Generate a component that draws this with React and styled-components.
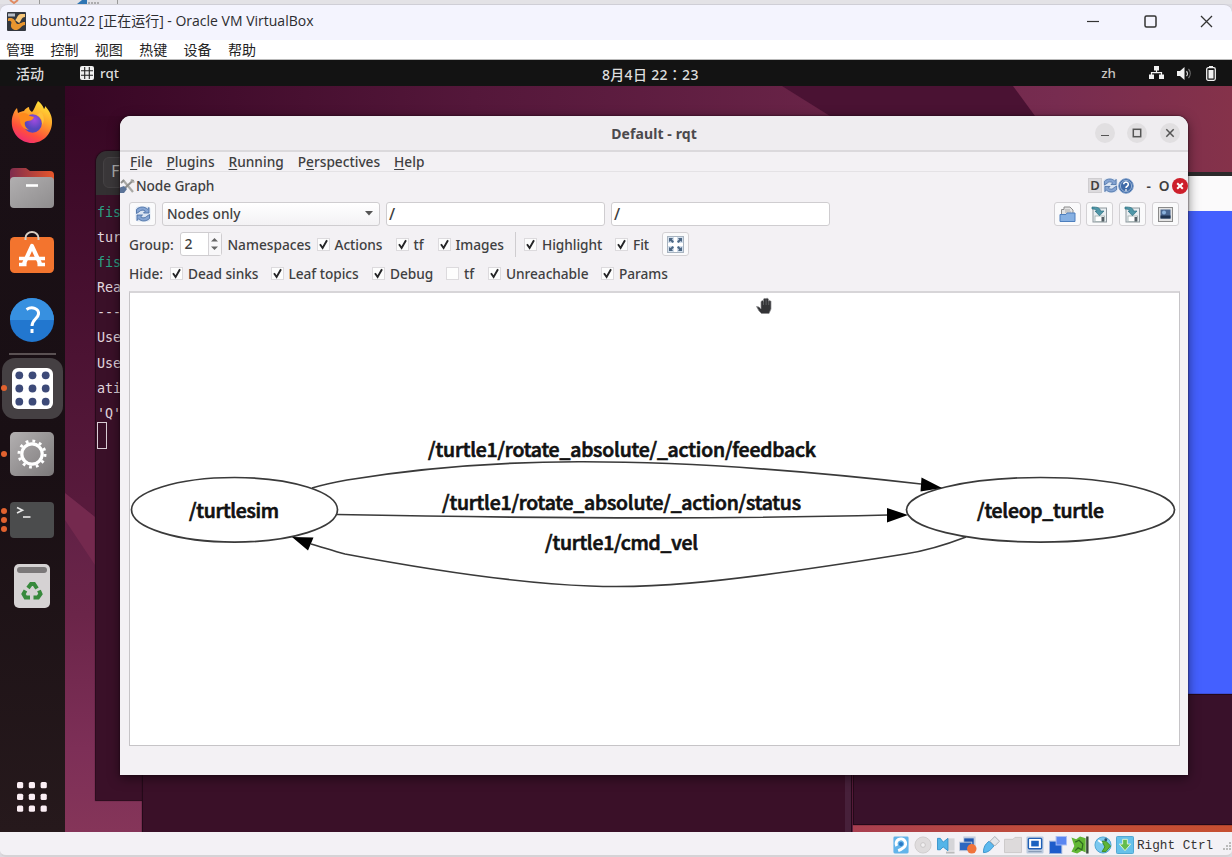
import React from 'react';
import styled, { createGlobalStyle } from 'styled-components';

const Global = createGlobalStyle`
  * { box-sizing: border-box; }
  html, body { margin: 0; padding: 0; overflow: hidden; }
  svg { display: block; flex: none; }
`;

const ui = `'Noto Sans', 'Noto Sans CJK SC', sans-serif`;

/* ---------- host window ---------- */
const Host = styled.div`
  width: 1232px;
  height: 857px;
  display: flex;
  flex-direction: column;
  background: #dcdae0;
  font-family: ${ui};
  overflow: hidden;
`;
const Behind = styled.div`
  height: 4px;
  flex: none;
  display: flex;
  background: #e3e2e6;
`;
const HostTitle = styled.header`
  height: 36px;
  flex: none;
  display: flex;
  align-items: center;
  padding: 0 19px 3px 7px;
  background: #f4f4fe;
  border-top: 1px solid #cfced6;
  border-radius: 8px 8px 0 0;
  font: 14px 'Open Sans', 'Noto Sans CJK SC', sans-serif;
  color: #2c2c30;
`;
const HostName = styled.span`
  flex: 1;
  padding: 0 0 2px 5px;
  white-space: nowrap;
`;
const HostControls = styled.div`
  display: flex;
  align-items: center;
  gap: 43.5px;
`;
const HostMenu = styled.nav`
  height: 20px;
  flex: none;
  display: flex;
  align-items: center;
  gap: 16.4px;
  padding: 0 0 2px 6px;
  background: #fff;
  border-bottom: 1px solid #b9b9b9;
  font: 14px/16px 'Noto Sans CJK SC', sans-serif;
  color: #222;
`;
const StatusBar = styled.footer`
  height: 25px;
  flex: none;
  display: flex;
  align-items: center;
  justify-content: flex-end;
  padding-top: 2px;
  background: #f3f1f5;
  border-bottom: 2px solid #d5d3d6;
  border-radius: 0 0 6px 6px;
`;
const StatusIcons = styled.div`
  display: flex;
  gap: 4.4px;
`;
const HostKey = styled.span`
  width: 98px;
  padding: 2px 0 0 3px;
  display: flex;
  justify-content: space-between;
  align-items: center;
  white-space: nowrap;
  font: 12.7px 'Liberation Mono', monospace;
  color: #333;
`;

/* ---------- guest shell ---------- */
const TopBar = styled.div`
  height: 26px;
  flex: none;
  display: grid;
  grid-template-columns: 1fr auto 1fr;
  align-items: center;
  background: #131313;
  color: #dedede;
  font: 500 13.4px ${ui};
`;
const TopLeft = styled.div`
  display: flex;
  align-items: center;
  padding-left: 16px;
`;
const Activities = styled.span`
  width: 64px;
  font-size: 14px;
`;
const AppName = styled.span`
  padding-left: 6px;
`;
const Clock = styled.div`
  width: 97px;
  margin-left: 69px;
  padding-top: 2px;
  font: 500 14px 'Noto Sans', 'Noto Sans CJK TC', sans-serif;
  letter-spacing: 0.3px;
  white-space: nowrap;
`;
const TopRight = styled.div`
  display: flex;
  justify-content: flex-end;
  align-items: center;
  padding-right: 16px;
`;
const Lang = styled.span`
  padding-right: 33px;
  color: #c9c6c2;
`;
const Gap = styled.span`
  width: ${(p) => p.$w}px;
  flex: none;
`;
const Guest = styled.div`
  flex: 1;
  min-height: 0;
  display: flex;
`;
const Dock = styled.aside`
  width: 65px;
  flex: none;
  display: flex;
  flex-direction: column;
  padding: 3px 0 14px;
  background: linear-gradient(#1a1016, #190f14 50%, #26191c);
`;
const DockItem = styled.div`
  height: 66px;
  flex: none;
  display: flex;
  align-items: center;
`;
const Dots = styled.span`
  position: relative;
  z-index: 1;
  width: 8px;
  display: flex;
  flex-direction: column;
  align-items: center;
  gap: 3px;
`;
const Dot = styled.i`
  width: 6px;
  height: 6px;
  border-radius: 3px;
  background: #e2622f;
`;
const DockTile = styled.div`
  width: ${(p) => (p.$active ? 61 : 48)}px;
  height: 61px;
  margin-left: ${(p) => (p.$active ? -6 : 0)}px;
  display: flex;
  align-items: center;
  justify-content: center;
  border-radius: 13px;
  background: ${(p) => (p.$active ? '#454043' : 'transparent')};
`;
const DockRule = styled.div`
  height: 2px;
  margin: 0 9px;
  flex: none;
  background: #5a5153;
`;
const DockFill = styled.div`
  flex: 1;
`;
const AppsGrid = styled.div`
  padding-left: 17px;
  padding-bottom: 6px;
`;

/* ---------- desktop windows ---------- */
const Desktop = styled.main`
  flex: 1;
  position: relative;
  overflow: hidden;
  background: #430a2c;
`;
const Wallpaper = styled.svg`
  width: 1167px;
  height: 746px;
`;
const Win = styled.section`
  position: absolute;
  left: ${(p) => p.$x}px;
  top: ${(p) => p.$y}px;
  width: ${(p) => p.$w}px;
  height: ${(p) => p.$h}px;
  display: flex;
  flex-direction: column;
  overflow: hidden;
`;
const TermWin = styled(Win)`
  background: ${(p) => p.$bg || '#3a1028'};
  box-shadow: 0 0 1px 1px #240919;
  border-radius: ${(p) => (p.$tabs ? '11px 0 0 0' : 0)};
  border-right: ${(p) => (p.$scroll ? '6px solid #47203a' : 'none')};
`;
const TermHeader = styled.div`
  height: 44px;
  flex: none;
  padding: 6px 0 0 7px;
  background: #333032;
`;
const TermTab = styled.div`
  width: 60px;
  height: 31px;
  padding: 5px 7px;
  border: 1px solid #454244;
  border-radius: 6px;
  background: #3a3739;
  color: #aaa;
  font: 15px 'DejaVu Sans Mono', monospace;
`;
const TermLine = styled.div`
  height: 25.1px;
  padding-left: 1px;
  font: 13.4px/25.1px 'DejaVu Sans Mono', monospace;
  white-space: pre;
  color: ${(p) => (p.$host ? '#2ba084' : '#e0d4dc')};
`;
const TermBody = styled.div`
  padding-top: 5px;
`;
const TermCursor = styled.div`
  width: 10px;
  height: 27px;
  margin-top: -4px;
  margin-left: 1px;
  border: 1px solid #d9ccd4;
`;
const TurtleWin = styled(Win)`
  background: #4460ff;
  border-top: 4px solid #2c2a2b;
`;
const TurtleHeader = styled.div`
  height: 35px;
  background: #fbfafb;
`;
const RqtWin = styled(Win)`
  background: #f3f1f4;
  border-radius: 11px 11px 0 0;
  box-shadow: 0 0 2px #1a0512, 0 3px 12px rgba(0, 0, 0, 0.5);
  color: #3f3f41;
  font: 500 13.7px ${ui};
`;
const RqtTitle = styled.div`
  height: 36px;
  margin-bottom: -1px;
  flex: none;
  display: grid;
  grid-template-columns: 1fr auto 1fr;
  align-items: center;
  background: #efedf0;
  border-bottom: 2px solid #dbd9dc;
`;
const RqtName = styled.span`
  grid-column: 2;
  font-weight: 700;
  font-size: 14px;
  letter-spacing: 0.1px;
  color: #4b494c;
`;
const RqtControls = styled.div`
  display: flex;
  justify-content: flex-end;
  gap: 12.6px;
  padding-right: 8px;
`;
const RoundBtn = styled.span`
  width: 20px;
  height: 20px;
  border-radius: 50%;
  background: #e1dfe1;
  display: flex;
  align-items: center;
  justify-content: center;
`;
const MenuRow = styled.nav`
  height: 21px;
  flex: none;
  display: flex;
  align-items: center;
  gap: 14px;
  padding-left: 10px;
  border-bottom: 1px solid #e4e2e5;
`;
const Mn = styled.span`
  text-decoration: underline;
  text-decoration-thickness: 1px;
  text-underline-offset: 2px;
`;
const DockRow = styled.div`
  height: 27px;
  flex: none;
  display: flex;
  align-items: center;
  white-space: nowrap;
`;
const DockName = styled.span`
  flex: 1;
  padding-left: 1px;
  letter-spacing: -0.1px;
`;
const DButton = styled.span`
  width: 14px;
  height: 15px;
  margin-right: 1px;
  font-weight: 600;
  font-size: 13px;
  line-height: 13px;
  text-align: center;
  background: #dcdadd;
  border: 1px solid #cfcdd0;
`;
const MiniText = styled.span`
  width: 15.5px;
  text-align: center;
  font-weight: 600;
`;
const ToolRow = styled.div`
  height: ${(p) => p.$h}px;
  flex: none;
  display: flex;
  align-items: center;
  padding: 0 9px;
  white-space: nowrap;
`;
const IconBtn = styled.span`
  width: 27px;
  height: 24px;
  flex: none;
  display: flex;
  align-items: center;
  justify-content: center;
  background: #fafafb;
  border: 1px solid #d3d1d4;
  border-radius: 3px;
`;
const Combo = styled.div`
  width: 218px;
  height: 24px;
  margin: 0 6px;
  padding: 0 6px 1px 4px;
  display: flex;
  align-items: center;
  justify-content: space-between;
  background: linear-gradient(#fff, #f3f2f4);
  border: 1px solid #cfcdd0;
  border-radius: 3px;
`;
const Field = styled.div`
  width: 219px;
  height: 24px;
  margin-right: 6px;
  padding-left: 2px;
  line-height: 23px;
  font-size: 16px;
  background: #fff;
  border: 1px solid #cfcdd0;
  border-radius: 3px;
`;
const RightTools = styled.div`
  flex: 1;
  display: flex;
  justify-content: flex-end;
  gap: 5.8px;
`;
const Text = styled.span`
  width: ${(p) => p.$w}px;
  flex: none;
`;
const Spin = styled.div`
  width: 42px;
  height: 24px;
  margin-right: 6px;
  display: flex;
  background: #fff;
  border: 1px solid #cfcdd0;
  border-radius: 3px;
`;
const SpinValue = styled.span`
  width: 28px;
  padding-left: 4px;
  line-height: 21px;
  font-size: 14px;
  border-right: 1px solid #d5d3d6;
`;
const SpinArrows = styled.span`
  flex: 1;
  background: #f8f7f9;
  display: flex;
  justify-content: center;
  align-items: center;
`;
const CheckItem = styled.span`
  width: ${(p) => p.$w}px;
  flex: none;
  display: flex;
  align-items: center;
  gap: 5px;
  letter-spacing: -0.05px;
`;
const Box = styled.span`
  width: 13px;
  height: 13px;
  flex: none;
  background: #fdfdfd;
  border: 1px solid #dcdadd;
`;
const Divider = styled.span`
  width: 1px;
  height: 25px;
  margin-right: 8px;
  background: #cfcdd0;
`;
const Canvas = styled.div`
  flex: 1;
  margin: 3px 8px 29px 9px;
  background: #fff;
  border: 1px solid #c6c4c7;
  border-top: 2px solid #d7d5d8;
`;

/* ---------- drawings ---------- */
const Refresh = ({ s = 16 }) => (
  <svg width={s} height={s} viewBox="0 0 16 16">
    <rect x=".5" y=".5" width="15" height="15" rx="3" fill="#dbe5f3" />
    <path d="M1.500 7.500V3.500C5 0 10 .5 12.300 3.200L14 1.500V7H8.500l1.800-1.800C8.500 3.500 5.500 4 4.500 5.500z" fill="#86a5d3" stroke="#41689f" strokeWidth=".8" />
    <path d="M14.500 8.500v4C11 16 6 15.500 3.700 12.800L2 14.500V9h5.500l-1.800 1.800C7.500 12.500 10.500 12 11.500 10.500z" fill="#86a5d3" stroke="#41689f" strokeWidth=".8" />
  </svg>
);
const HelpBall = () => (
  <svg width="16" height="16" viewBox="0 0 16 16">
    <circle cx="8" cy="8" r="7.300" fill="#3f6ba8" stroke="#7b9cc8" />
    <circle cx="8" cy="8" r="5.600" fill="none" stroke="#a9c0de" strokeWidth=".8" />
    <path d="M5.700 6.300a2.300 2.200 0 1 1 3.500 1.900C8.200 8.800 8 9 8 9.900M8 11.200v1.500" fill="none" stroke="#fff" strokeWidth="1.600" />
  </svg>
);
const Tools = () => (
  <svg width="15" height="16" viewBox="0 0 15 16">
    <path d="M3 2l10 12" stroke="#a9a9a5" strokeWidth="2.200" />
    <path d="M13.500 2L5 10" stroke="#8f8f8c" strokeWidth="2" />
    <path d="M11 1.500l1.500 2.300 2 .2" stroke="#a9a9a5" strokeWidth="1.500" fill="none" />
    <path d="M0 9.500l4-1.500 3 3-3 4H0z" fill="#5b7397" />
    <path d="M1 5l3-3" stroke="#8f8f8c" strokeWidth="2" />
  </svg>
);
const CloseBall = () => (
  <svg width="16" height="16" viewBox="0 0 16 16">
    <circle cx="8" cy="8" r="8" fill="#cd1f2b" />
    <path d="M5.200 5.200l5.600 5.600M10.800 5.200l-5.600 5.600" stroke="#fff" strokeWidth="2" />
  </svg>
);
const OpenIcon = () => (
  <svg width="17" height="17" viewBox="0 0 17 17">
    <path d="M2.500 8V3.500h2.500V1h6l3 3v5" fill="#e4e4e4" stroke="#8c8c8c" />
    <path d="M6 4h5M6 6h6" stroke="#aaa" />
    <path d="M1 15.500V8.500h6l1-1.500h8v8.500z" fill="#86b0e2" stroke="#4e7fbd" />
  </svg>
);
const SaveIcon = () => (
  <svg width="17" height="17" viewBox="0 0 17 17">
    <rect x="2" y="2" width="13.500" height="14" fill="#e9eef1" stroke="#8d979e" />
    <rect x="4" y="10" width="9.500" height="5.500" fill="#fff" stroke="#9aa" strokeWidth=".8" />
    <rect x="10.500" y="11" width="2.500" height="4.500" fill="#555f66" />
    <path d="M1 1c5 0 8 .5 8.500 4H13L8.500 9.800 4 5h2C5.500 3.500 3.500 3 1 3z" fill="#4f97a8" stroke="#2f7182" strokeWidth=".7" />
  </svg>
);
const ImageIcon = () => (
  <svg width="17" height="17" viewBox="0 0 17 17">
    <rect x="1.500" y="1.500" width="14" height="14" fill="#e3e3e3" stroke="#8a8a8a" />
    <rect x="3.500" y="3.500" width="10" height="9" fill="#4a6790" />
    <path d="M3.500 9.500h10v3h-10z" fill="#1f3350" />
    <circle cx="7" cy="6.500" r="2" fill="#8bb2dc" />
  </svg>
);
const FitIcon = () => (
  <svg width="17" height="17" viewBox="0 0 17 17">
    <rect x=".5" y=".5" width="16" height="16" fill="#d3dfec" stroke="#a7b3bf" />
    <path d="M8.500 1v15M1 8.500h15" stroke="#fff" strokeWidth="3" />
    <path d="M2 6V2h4L5 3.500l2 2L5.500 7l-2-2zM11 2h4v4l-1.500-1-2 2L10 5.500l2-2zM2 11v4h4l-1-1.500 2-2L5.500 10l-2 2zM15 11v4h-4l1-1.500-2-2 1.500-1.500 2 2z" fill="#4d6885" />
  </svg>
);
const CheckMark = () => (
  <svg width="11" height="11" viewBox="0 0 11 11">
    <path d="M2 5.200l2.600 3.800L9 1.300" fill="none" stroke="#252527" strokeWidth="1.900" />
  </svg>
);
const Check = ({ w, off, children }) => (
  <CheckItem $w={w}>
    <Box>{!off && <CheckMark />}</Box>
    {children}
  </CheckItem>
);

const Firefox = () => (
  <svg width="42" height="42" viewBox="0 0 42 42">
    <defs>
      <linearGradient id="fx" x1=".8" y1="0" x2=".3" y2="1">
        <stop offset="0" stopColor="#ffe93b" />
        <stop offset=".4" stopColor="#ffa22a" />
        <stop offset=".75" stopColor="#ff4f3c" />
        <stop offset="1" stopColor="#ef2b77" />
      </linearGradient>
      <radialGradient id="fxp" cx=".6" cy=".3">
        <stop offset="0" stopColor="#a24be0" />
        <stop offset="1" stopColor="#5546bd" />
      </radialGradient>
    </defs>
    <path d="M27 0c3 2 5 5 6 8 1-1 1-2 1-3 5 5 7.500 11 7 17-.5 11-9 20-20 20S1 33 .8 22C.7 17 2 11 6 7l1 5c2-1 4-2 6-2 1-2 3-3.500 5-4 0 2 1 4 3 5 2-2 3-6 6-11z" fill="url(#fx)" />
    <circle cx="21.500" cy="22.500" r="9.300" fill="url(#fxp)" />
    <path d="M8 13c5-2 8-1 11 2l4 1c-1 3-4 4-7 4l-2 1c-1 3 1 6 4 8-6-1-9-5-9-10z" fill="#ff8a1c" />
    <path d="M26 14c4 2 6 6 5 10 3-4 2-10-1-13z" fill="#ffc23a" />
  </svg>
);
const Files = () => (
  <svg width="44" height="40" viewBox="0 0 44 40">
    <defs>
      <linearGradient id="fl" x1="0" x2="1"><stop offset="0" stopColor="#7e2c4d" /><stop offset="1" stopColor="#e8562a" /></linearGradient>
      <linearGradient id="fg" x1="0" x2="1" y1="0" y2="1"><stop offset="0" stopColor="#b1afb0" /><stop offset="1" stopColor="#8f8d8e" /></linearGradient>
    </defs>
    <path d="M0 20V4q0-4 4-4h12l4 3h20q4 0 4 4v13z" fill="url(#fl)" />
    <rect y="9" width="44" height="31" rx="4" fill="url(#fg)" />
    <path d="M16 17.500h12" stroke="#fff" strokeWidth="2.600" />
  </svg>
);
const Software = () => (
  <svg width="44" height="46" viewBox="0 -3 44 46">
    <rect y="3" width="44" height="36" rx="4.500" fill="#f3742e" />
    <path d="M15.500 6V4a6.500 6 0 0 1 13 0v2" fill="none" stroke="#d9cfc4" strokeWidth="2" />
    <path d="M14 29.500L22 12L30 29.500" fill="none" stroke="#fff" strokeWidth="4.200" strokeLinejoin="round" />
    <path d="M9 24.500h26M9 30.500h7.500M27.500 30.500H35" fill="none" stroke="#fff" strokeWidth="3.400" />
  </svg>
);
const HelpApp = () => (
  <svg width="44" height="44" viewBox="0 0 44 44">
    <circle cx="22" cy="22" r="22" fill="#2277cf" />
    <path d="M0 22a22 22 0 0 1 44 0z" fill="#3790e0" />
    <path d="M16.500 11.500C22 8 29 10.500 28.500 16c-.4 4.500-6.500 5.500-6.500 12M22 31v4" fill="none" stroke="#fff" strokeWidth="3" />
  </svg>
);
const nine = [0, 1, 2, 3, 4, 5, 6, 7, 8];
const RqtApp = () => (
  <svg width="41" height="41" viewBox="0 0 41 41">
    <rect width="41" height="41" rx="6" fill="#fff" />
    {nine.map((i) => (
      <circle key={i} cx={7.300 + (i % 3) * 13.200} cy={7.300 + Math.floor(i / 3) * 13.200} r="3.900" fill="#3d4a78" />
    ))}
  </svg>
);
const Settings = () => (
  <svg width="44" height="44" viewBox="0 0 44 44">
    <defs>
      <linearGradient id="st" x1="0" x2="1" y1="0" y2="1"><stop offset="0" stopColor="#b3b0b1" /><stop offset="1" stopColor="#7b7879" /></linearGradient>
    </defs>
    <rect width="44" height="44" rx="5" fill="url(#st)" />
    <circle cx="22" cy="22" r="10.200" fill="none" stroke="#fff" strokeWidth="3.200" />
    <circle cx="22" cy="22" r="13" fill="none" stroke="#fff" strokeWidth="3" strokeDasharray="2.800 4.007" />
  </svg>
);
const TerminalApp = () => (
  <svg width="44" height="36" viewBox="0 0 44 36">
    <rect width="44" height="36" rx="4" fill="#4b4c4d" />
    <path d="M7 5.500l5.500 2.700L7 11" fill="none" stroke="#e9e9e9" strokeWidth="1.600" />
    <path d="M13 15h7.500" stroke="#e9e9e9" strokeWidth="1.600" />
  </svg>
);
const Trash = () => (
  <svg width="36" height="44" viewBox="0 0 36 44">
    <rect width="36" height="44" rx="5" fill="#d5d2d3" />
    <rect x="3" y="3" width="30" height="6" rx="3" fill="#7b7879" />
    <g fill="none" stroke="#37893c" strokeWidth="4">
      <path d="M14 24l3-4h3l3 4.500" />
      <path d="M25 26.500l1.500 3.500-2.500 3.500h-4.500" />
      <path d="M16 33.500h-4.500L9.500 30l2-3.500" />
    </g>
  </svg>
);
const AppDots = ({ s, r, fill }) => (
  <svg width={s} height={s} viewBox="0 0 30 30">
    {nine.map((i) => (
      <rect key={i} x={(i % 3) * 11.800} y={Math.floor(i / 3) * 11.800} width="6.200" height="6.200" rx={r} fill={fill} />
    ))}
  </svg>
);
const GridLogo = () => (
  <svg width="14" height="14" viewBox="0 0 14 14">
    <rect width="14" height="14" rx="2" fill="#efefef" />
    <path d="M4.700 1v12M9.300 1v12M1 4.700h12M1 9.300h12" stroke="#222" strokeWidth="1.100" />
  </svg>
);
const VBoxLogo = () => (
  <svg width="19" height="19" viewBox="0 0 19 19">
    <rect width="19" height="19" rx="1" fill="#33373f" />
    <path d="M1 6.500c2-1 5-.5 6.500 1.500S9 12 11 12s3-2 7-2v3c-3 0-4 3-7 4.500S4 17 4 14s1-3 0-4.500S2 9 1 9z" fill="#e9952e" />
    <path d="M8 8c2 0 2-6 6-6h4v3c-4 0-4 5-6 6z" fill="#f8c77a" />
    <path d="M1 1.500h7v3H1z" fill="#b9bec8" />
  </svg>
);
const Network = () => (
  <svg width="15" height="14" viewBox="0 0 15 14" fill="#f1f1f1">
    <rect x="5" width="5" height="4.500" />
    <rect y="8.500" width="5" height="4.500" />
    <rect x="10" y="8.500" width="5" height="4.500" />
    <path d="M7.500 4v3M2.500 9V6.700h10V9" fill="none" stroke="#f1f1f1" strokeWidth="1.200" />
  </svg>
);
const Volume = () => (
  <svg width="15" height="13" viewBox="0 0 15 13">
    <path d="M0 4h3l4.500-4v13L3 9H0z" fill="#f1f1f1" />
    <path d="M9.500 4a4 4 0 0 1 0 5" fill="none" stroke="#d0d0d0" strokeWidth="1.200" />
    <path d="M11.500 2a7 7 0 0 1 0 9" fill="none" stroke="#777" strokeWidth="1.200" />
  </svg>
);
const Battery = () => (
  <svg width="10" height="15" viewBox="0 0 10 15">
    <rect x="3" width="4" height="2" fill="#f1f1f1" />
    <rect x=".7" y="1.700" width="8.600" height="12.600" rx="1.500" fill="none" stroke="#f1f1f1" strokeWidth="1.300" />
    <rect x="2.500" y="4" width="5" height="8.500" fill="#f1f1f1" />
  </svg>
);
const Hand = () => (
  <g transform="translate(755.500 297)">
    <path d="M1 9.500l2.500.5 2 2V4.500l1.500-1 1 1V2l1.500-.8L10.500 2V1.500l1.500-.3 1 1V4l1.500-.5 1 1V12l-2 4.500H6L3.500 14z" fill="#333436" stroke="#8a8a8c" strokeWidth=".7" />
    <path d="M8 4v4M10.600 2.500V8M13.200 4v4" stroke="#77787a" strokeWidth=".6" />
  </g>
);

const statusIcons = [
  <g key="hdd"><rect x="1" width="16" height="18" rx="1.500" fill="#62b4ea" /><path d="M4.500 10A5 5 0 1 1 12 11.500Q9 14 6 15" fill="none" stroke="#fff" strokeWidth="3.200" /><circle cx="9" cy="8" r="2.200" fill="#2b78c4" /></g>,
  <g key="cd"><circle cx="9" cy="9" r="8.500" fill="#dfdcdd" stroke="#cfcccd" /><circle cx="9" cy="9" r="2.500" fill="#f1eff0" stroke="#c9c6c7" /></g>,
  <g key="audio"><rect x="10" y="2" width="8" height="13" fill="#d5d5d8" /><path d="M0 2h3l3 4 5-4v13l-5-4-3 3H0z" fill="#55b5e8" stroke="#3893cb" /><path d="M9 17h9" stroke="#bbb" strokeWidth="2" /></g>,
  <g key="net"><rect x="4" y="0" width="13" height="10" fill="#c3cddd" /><rect x="5" y="2" width="10" height="7" fill="#1f58b3" /><rect y="6" width="13" height="9" fill="#2e67c0" stroke="#c3cddd" /><circle cx="13" cy="13" r="5" fill="#f0743c" /></g>,
  <g key="usb"><path d="M1 17c0-6 2-9 6-12l5 5c-3 4-6 7-11 7z" fill="#5db9ee" stroke="#3b94cc" /><path d="M8 5l5-5 5 5-5 5z" fill="#e3e6ea" stroke="#a9adb3" /></g>,
  <g key="share"><path d="M0 3h9l2-2h7v16H0z" fill="#dddadb" stroke="#cbc8c9" /></g>,
  <g key="display"><rect width="18" height="18" rx="1" fill="#bccbdf" /><rect x="2" y="2" width="14" height="11" rx="1" fill="#fff" stroke="#205fb6" strokeWidth="1.500" /><rect x="5" y="4.500" width="8" height="6" fill="#1b62c0" /><path d="M2 16h14" stroke="#7f93ad" /></g>,
  <g key="rec"><rect y="5" width="13" height="13" fill="#1d5ccb" stroke="#9bb4de" /><rect x="7" y="0" width="11" height="9" fill="#5a86f1" stroke="#a9bdf4" /></g>,
  <g key="cpu"><path d="M0 1l5 2 4-3 6 2v15l-4-2-5 3-6-2 3-6z" fill="#62b734" /><path d="M4 6l4-2 4 4-1 6-4-2-3 3" fill="none" stroke="#2f6a20" strokeWidth="1.300" /><rect x="15.500" y="0" width="2.500" height="18" fill="#3c4a3a" /></g>,
  <g key="mouse"><circle cx="9" cy="9" r="8.500" fill="#7cc8ef" stroke="#4ba3d3" /><path d="M8 5l4 0 5 5-5 6H8l3-5z" fill="#5fb536" stroke="#3d8a22" /><path d="M4 4l4 3" stroke="#fff" strokeWidth="2" /><circle cx="12" cy="3.500" r="1.500" fill="#29506b" /></g>,
  <g key="key"><rect width="18" height="18" rx="1" fill="#66c1ea" stroke="#4aa4d0" /><path d="M6.500 3h5v5H15l-6 7-6-7h3.500z" fill="#64bd4c" stroke="#e1f4dd" /></g>,
];

const Graph = () => (
  <svg width="1048" height="451" viewBox="130 293 1048 451" fontFamily="'Noto Sans CJK SC', sans-serif" fontSize="19.4">
    <g fill="none" stroke="#3a3a3a" strokeWidth="1.700">
      <ellipse cx="234.500" cy="509.800" rx="103" ry="32.300" />
      <ellipse cx="1040.500" cy="509.800" rx="134" ry="32.300" />
      <path d="M312 488C325 484 336 482 347 480C480 458 640 452 921 484" />
      <path d="M337 514.500C520 518 700 520 888 515" />
      <path d="M966 537C940 547 925 551 905 554C700 587 640 588 590 586C520 583.500 430 570 345 554C333 551 322 547 311 544" />
    </g>
    <path d="M921.500 477.500L942 488L920.500 491.500zM887 508L908 515L887 522.500zM292 537L313.500 537.500L308 550.500z" />
    <g textAnchor="middle" fill="#111" stroke="#111" strokeWidth=".7">
      <text x="622" y="456.700" textLength="388">/turtle1/rotate_absolute/_action/feedback</text>
      <text x="621.500" y="509.800" textLength="359">/turtle1/rotate_absolute/_action/status</text>
      <text x="621.500" y="550.300" textLength="153">/turtle1/cmd_vel</text>
      <text x="234" y="518" textLength="90">/turtlesim</text>
      <text x="1040.500" y="518" textLength="127">/teleop_turtle</text>
    </g>
    <Hand />
  </svg>
);

const Launcher = ({ dots = 0, active, children }) => (
  <DockItem>
    <Dots>{Array.from({ length: dots }, (_, i) => <Dot key={i} />)}</Dots>
    <DockTile $active={active}>{children}</DockTile>
  </DockItem>
);

export default function App() {
  return (
    <Host>
      <Global />
      <Behind>
        <svg width="360" height="4" viewBox="0 0 360 4">
          <path d="M10 0l4 3 4-3" stroke="#e08a62" strokeWidth="2" fill="none" />
          <path d="M39.500 0v4M117.500 0v4" stroke="#999" />
          <path d="M77 4l5-4h5v4z" fill="#2f76b4" />
          <path d="M88 3h12" stroke="#777" strokeDasharray="2 1" />
        </svg>
      </Behind>
      <HostTitle>
        <VBoxLogo />
        <HostName>ubuntu22 [正在运行] - Oracle VM VirtualBox</HostName>
        <HostControls>
          <svg width="13" height="13" viewBox="0 0 13 13"><path d="M0 6.500h12" stroke="#333" strokeWidth="1.200" /></svg>
          <svg width="13" height="13" viewBox="0 0 13 13"><rect x="1" y="1" width="11" height="11" rx="1.500" fill="none" stroke="#333" strokeWidth="1.500" /></svg>
          <svg width="13" height="13" viewBox="0 0 13 13"><path d="M1 1l11 11M12 1L1 12" stroke="#333" strokeWidth="1.300" /></svg>
        </HostControls>
      </HostTitle>
      <HostMenu>
        {['管理', '控制', '视图', '热键', '设备', '帮助'].map((m) => <span key={m}>{m}</span>)}
      </HostMenu>

      <TopBar>
        <TopLeft>
          <Activities>活动</Activities>
          <GridLogo />
          <AppName>rqt</AppName>
        </TopLeft>
        <Clock lang="zh-TW">8月4日 22：23</Clock>
        <TopRight>
          <Lang>zh</Lang>
          <Network />
          <Gap $w={13} />
          <Volume />
          <Gap $w={14} />
          <Battery />
        </TopRight>
      </TopBar>

      <Guest>
        <Dock>
          <Launcher><Firefox /></Launcher>
          <Launcher><Files /></Launcher>
          <Launcher><Software /></Launcher>
          <Launcher><HelpApp /></Launcher>
          <DockRule />
          <Launcher dots={1} active><RqtApp /></Launcher>
          <Launcher dots={1}><Settings /></Launcher>
          <Launcher dots={3}><TerminalApp /></Launcher>
          <Launcher><Trash /></Launcher>
          <DockFill />
          <AppsGrid><AppDots s={30} r={1.500} fill="#fbeef4" /></AppsGrid>
        </Dock>

        <Desktop>
          <Wallpaper viewBox="65 86 1167 746">
            <defs>
              <linearGradient id="wt" x1="0" x2="1"><stop offset="0" stopColor="#370624" /><stop offset=".35" stopColor="#54173a" /><stop offset=".85" stopColor="#772c50" /><stop offset="1" stopColor="#85324a" /></linearGradient>
              <linearGradient id="wl" x1="0" x2="0" y1="0" y2="1"><stop offset="0" stopColor="#380724" /><stop offset="1" stopColor="#581a3c" /></linearGradient>
              <linearGradient id="wb" x1="0" x2="0" y1="0" y2="1"><stop offset="0" stopColor="#5f2045" /><stop offset=".35" stopColor="#6b2549" /><stop offset=".75" stopColor="#7d2f57" /><stop offset="1" stopColor="#853559" /></linearGradient>
              <linearGradient id="wo" x1="0" x2="1"><stop offset="0" stopColor="#a83f50" /><stop offset=".5" stopColor="#c24d3a" /><stop offset="1" stopColor="#c64f31" /></linearGradient>
            </defs>
            <rect x="65" y="86" width="1167" height="746" fill="url(#wt)" />
            <path d="M782 86h231l22 30H830z" fill="#4a1233" />
            <rect x="65" y="116" width="78" height="384" fill="url(#wl)" />
            <rect x="65" y="498" width="78" height="334" fill="url(#wb)" />
            <path d="M65 493L95 517V498H65z" fill="#581a3c" />
            <path d="M65 493L95 517L143 556V640L95 565L65 520z" fill="#74294e" />
            <rect x="853" y="824" width="379" height="8" fill="url(#wo)" />
          </Wallpaper>

          <TurtleWin $x={900} $y={86} $w={270} $h={522}>
            <TurtleHeader />
          </TurtleWin>
          <TermWin $x={31} $y={65} $w={600} $h={649} $tabs>
            <TermHeader><TermTab>F</TermTab></TermHeader>
            <TermBody>
              <TermLine $host>fis</TermLine>
              <TermLine>tur</TermLine>
              <TermLine $host>fis</TermLine>
              <TermLine>Rea</TermLine>
              <TermLine>---</TermLine>
              <TermLine>Use</TermLine>
              <TermLine>Use</TermLine>
              <TermLine>ati</TermLine>
              <TermLine>'Q'</TermLine>
              <TermCursor />
            </TermBody>
          </TermWin>
          <TermWin $x={78} $y={620} $w={708} $h={140} $scroll />
          <TermWin $x={789} $y={609} $w={400} $h={129} $bg="#39112a" />

          <RqtWin $x={55} $y={30} $w={1068} $h={659}>
            <RqtTitle>
              <RqtName>Default - rqt</RqtName>
              <RqtControls>
                <RoundBtn><svg width="10" height="10" viewBox="0 0 10 10"><path d="M1 7.500h8" stroke="#555" strokeWidth="1.200" /></svg></RoundBtn>
                <RoundBtn><svg width="10" height="10" viewBox="0 0 10 10"><rect x="1.300" y="1.300" width="7.400" height="7.400" fill="none" stroke="#555" strokeWidth="1.500" /></svg></RoundBtn>
                <RoundBtn><svg width="10" height="10" viewBox="0 0 10 10"><path d="M1.300 1.300l7.400 7.400M8.700 1.300L1.300 8.700" stroke="#555" strokeWidth="1.500" /></svg></RoundBtn>
              </RqtControls>
            </RqtTitle>
            <MenuRow>
              <span><Mn>F</Mn>ile</span>
              <span><Mn>P</Mn>lugins</span>
              <span><Mn>R</Mn>unning</span>
              <span>P<Mn>e</Mn>rspectives</span>
              <span><Mn>H</Mn>elp</span>
            </MenuRow>
            <DockRow>
              <Tools />
              <DockName>Node Graph</DockName>
              <DButton>D</DButton>
              <Refresh s={15} />
              <HelpBall />
              <Gap $w={7} />
              <MiniText>-</MiniText>
              <MiniText>O</MiniText>
              <CloseBall />
            </DockRow>
            <ToolRow $h={30}>
              <IconBtn><Refresh /></IconBtn>
              <Combo>
                Nodes only
                <svg width="8" height="5" viewBox="0 0 8 5"><path d="M0 0h8L4 4.500z" fill="#555" /></svg>
              </Combo>
              <Field>/</Field>
              <Field>/</Field>
              <RightTools>
                <IconBtn><OpenIcon /></IconBtn>
                <IconBtn><SaveIcon /></IconBtn>
                <IconBtn><SaveIcon /></IconBtn>
                <IconBtn><ImageIcon /></IconBtn>
              </RightTools>
            </ToolRow>
            <ToolRow $h={30}>
              <Text $w={50.5}>Group:</Text>
              <Spin>
                <SpinValue>2</SpinValue>
                <SpinArrows><svg width="7" height="14" viewBox="0 0 7 14"><path d="M0 4.500L3.500 1 7 4.500zM0 9.500h7L3.500 13z" fill="#666" /></svg></SpinArrows>
              </Spin>
              <Text $w={89}>Namespaces</Text>
              <Check w={79}>Actions</Check>
              <Check w={42}>tf</Check>
              <Check w={77.5}>Images</Check>
              <Divider />
              <Check w={91}>Highlight</Check>
              <Check w={47}>Fit</Check>
              <IconBtn><FitIcon /></IconBtn>
            </ToolRow>
            <ToolRow $h={29}>
              <Text $w={41}>Hide:</Text>
              <Check w={100.5}>Dead sinks</Check>
              <Check w={101.5}>Leaf topics</Check>
              <Check w={74}>Debug</Check>
              <Check w={42} off>tf</Check>
              <Check w={113}>Unreachable</Check>
              <Check w={70}>Params</Check>
            </ToolRow>
            <Canvas><Graph /></Canvas>
          </RqtWin>
        </Desktop>
      </Guest>

      <StatusBar>
        <StatusIcons>
          {statusIcons.map((g, i) => <svg key={i} width="18" height="18" viewBox="-.5 -.5 19 19">{g}</svg>)}
        </StatusIcons>
        <HostKey>
          Right Ctrl
          <svg width="9" height="10" viewBox="0 0 9 10"><path d="M7 1v2M7 4v2M4 4v2M7 7v2M4 7v2M1 7v2" stroke="#bbb" strokeWidth="2" /></svg>
        </HostKey>
      </StatusBar>
    </Host>
  );
}
